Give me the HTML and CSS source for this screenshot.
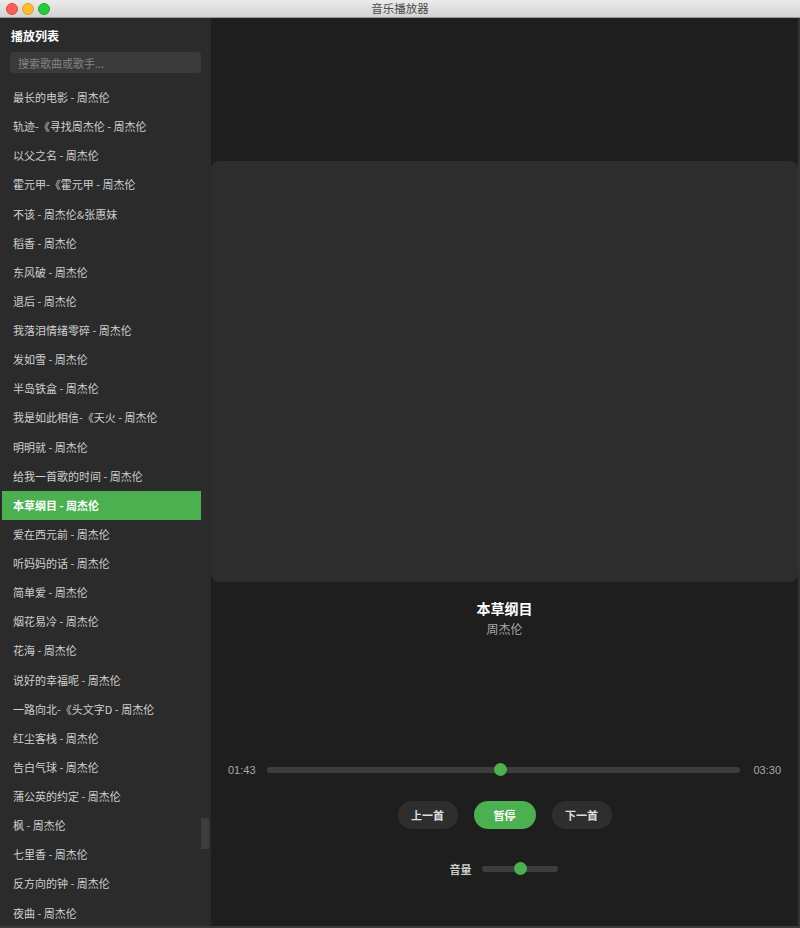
FILE: index.html
```html
<!DOCTYPE html>
<html lang="zh-CN">
<head>
    <meta charset="UTF-8">
    <meta name="viewport" content="width=device-width, initial-scale=1.0">
    <title>音乐播放器</title>
    <link rel="stylesheet" href="styles.css">
</head>
<body>
    <div class="window">
        <div class="titlebar">
            <div class="lights">
                <span class="light red"></span>
                <span class="light yellow"></span>
                <span class="light green"></span>
            </div>
            <div class="title">音乐播放器</div>
        </div>

        <div class="app">
            <aside class="sidebar">
                <div class="sidebar-title">播放列表</div>
                <input class="search" type="text" placeholder="搜索歌曲或歌手...">
                <ul class="playlist">
                    <li>最长的电影 - 周杰伦</li>
                    <li>轨迹-《寻找周杰伦 - 周杰伦</li>
                    <li>以父之名 - 周杰伦</li>
                    <li>霍元甲-《霍元甲 - 周杰伦</li>
                    <li>不该 - 周杰伦&amp;张惠妹</li>
                    <li>稻香 - 周杰伦</li>
                    <li>东风破 - 周杰伦</li>
                    <li>退后 - 周杰伦</li>
                    <li>我落泪情绪零碎 - 周杰伦</li>
                    <li>发如雪 - 周杰伦</li>
                    <li>半岛铁盒 - 周杰伦</li>
                    <li>我是如此相信-《天火 - 周杰伦</li>
                    <li>明明就 - 周杰伦</li>
                    <li>给我一首歌的时间 - 周杰伦</li>
                    <li class="active">本草纲目 - 周杰伦</li>
                    <li>爱在西元前 - 周杰伦</li>
                    <li>听妈妈的话 - 周杰伦</li>
                    <li>简单爱 - 周杰伦</li>
                    <li>烟花易冷 - 周杰伦</li>
                    <li>花海 - 周杰伦</li>
                    <li>说好的幸福呢 - 周杰伦</li>
                    <li>一路向北-《头文字D - 周杰伦</li>
                    <li>红尘客栈 - 周杰伦</li>
                    <li>告白气球 - 周杰伦</li>
                    <li>蒲公英的约定 - 周杰伦</li>
                    <li>枫 - 周杰伦</li>
                    <li>七里香 - 周杰伦</li>
                    <li>反方向的钟 - 周杰伦</li>
                    <li>夜曲 - 周杰伦</li>
                </ul>
                <div class="scroll-thumb"></div>
            </aside>

            <main class="player">
                <div class="cover"></div>

                <div class="track-info">
                    <div class="track-name">本草纲目</div>
                    <div class="track-artist">周杰伦</div>
                </div>

                <div class="progress-row">
                    <span class="time">01:43</span>
                    <div class="slider progress">
                        <span class="knob" style="left: 49.3%"></span>
                    </div>
                    <span class="time">03:30</span>
                </div>

                <div class="controls">
                    <button class="btn">上一首</button>
                    <button class="btn play">暂停</button>
                    <button class="btn">下一首</button>
                </div>

                <div class="volume-row">
                    <span class="volume-label">音量</span>
                    <div class="slider volume">
                        <span class="knob" style="left: 51%"></span>
                    </div>
                </div>
            </main>
        </div>
    </div>
</body>
</html>
```

FILE: styles.css
```css
:root {
    --sidebar-bg: #2b2b2b;
    --main-bg: #1e1e1e;
    --card-bg: #2d2d2d;
    --accent: #4caf50;
    --text: #cfcfcf;
    --muted: #a8a8a8;
}
html, body {
    margin: 0;
    padding: 0;
    background: var(--main-bg);
    font-family: 'Noto Sans CJK SC', 'Noto Sans', sans-serif;
}
.window {
    height: 928px;
    display: flex;
    flex-direction: column;
    overflow: hidden;
    border-bottom: 2px solid #3a3a3a;
    box-sizing: border-box;
}
.titlebar {
    height: 18px;
    flex-shrink: 0;
    position: relative;
    background: linear-gradient(#ebebeb, #d3d3d3);
    border-bottom: 1px solid #9a9a9a;
    box-sizing: border-box;
    display: flex;
    align-items: center;
    justify-content: center;
}
.lights {
    position: absolute;
    left: 6px;
    top: 3px;
    display: flex;
    gap: 4px;
}
.light {
    width: 12px;
    height: 12px;
    border-radius: 50%;
    box-sizing: border-box;
}
.red { background: #fc5f57; border: 1px solid #df4744; }
.yellow { background: #fdbc2e; border: 1px solid #de9f34; }
.green { background: #29c940; border: 1px solid #1aab29; }
.title {
    font-size: 11.5px;
    line-height: 17px;
    color: #4a4a4a;
}
.app {
    flex: 1;
    display: flex;
    min-height: 0;
}

/* sidebar */
.sidebar {
    width: 211px;
    flex-shrink: 0;
    background: var(--sidebar-bg);
    position: relative;
    overflow: hidden;
}
.sidebar-title {
    color: #fff;
    font-size: 12px;
    font-weight: 700;
    line-height: 16px;
    padding: 10px 0 0 11px;
}
.search {
    display: block;
    margin: 8px 0 0 10px;
    width: 191px;
    height: 21px;
    box-sizing: border-box;
    border: none;
    border-radius: 4px;
    background: #3a3a3a;
    padding: 0 8px;
    font-family: inherit;
    font-size: 11px;
    color: #ddd;
    outline: none;
}
.search::placeholder {
    color: #858585;
}
.playlist {
    list-style: none;
    margin: 10px 0 0 2px;
    padding: 0;
    width: 199px;
}
.playlist li {
    height: 29.14px;
    line-height: 29px;
    padding-left: 11px;
    font-size: 11px;
    color: var(--text);
    white-space: nowrap;
}
.playlist li.active {
    background: var(--accent);
    color: #fff;
    font-weight: 700;
}
.scroll-thumb {
    position: absolute;
    left: 201px;
    top: 800px;
    width: 8px;
    height: 31px;
    background: #3d3d3d;
}

/* player */
.player {
    flex: 1;
    display: flex;
    flex-direction: column;
    align-items: stretch;
    padding-top: 143px;
    border-right: 2px solid #333;
}
.cover {
    height: 421px;
    background: var(--card-bg);
    border-radius: 8px;
}
.track-info {
    margin-top: 16px;
    text-align: center;
}
.track-name {
    font-size: 14px;
    font-weight: 700;
    line-height: 20px;
    color: #fff;
}
.track-artist {
    margin-top: 2px;
    font-size: 12px;
    line-height: 18px;
    color: var(--muted);
}
.progress-row {
    margin-top: 125px;
    padding: 0 17px;
    height: 13px;
    display: flex;
    align-items: center;
    gap: 11px;
}
.time {
    font-family: 'Liberation Sans', Arial, sans-serif;
    font-size: 11px;
    color: var(--muted);
}
.slider {
    position: relative;
    height: 6px;
    border-radius: 3px;
    background: #3d3d3d;
}
.progress {
    flex: 1;
    margin-right: 2px;
}
.knob {
    position: absolute;
    top: 50%;
    width: 13px;
    height: 13px;
    margin: -6.5px 0 0 -6.5px;
    border-radius: 50%;
    background: var(--accent);
}
.controls {
    margin-top: 25px;
    display: flex;
    justify-content: center;
    gap: 16px;
}
.btn {
    height: 28px;
    min-width: 60px;
    padding: 0 13px;
    border: none;
    border-radius: 14px;
    background: #2e2e2e;
    color: #ddd;
    font-family: inherit;
    font-size: 11px;
    font-weight: 700;
    cursor: pointer;
}
.btn.play {
    min-width: 62px;
    background: var(--accent);
    color: #fff;
}
.volume-row {
    margin-top: 33px;
    height: 13px;
    display: flex;
    align-items: center;
    justify-content: center;
    gap: 10px;
}
.volume-label {
    font-size: 11px;
    font-weight: 700;
    color: #ccc;
}
.volume {
    width: 76px;
    margin-right: 2px;
}
```
